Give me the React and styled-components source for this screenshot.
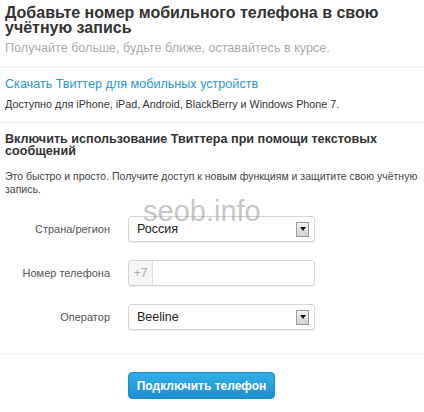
import React from 'react';
import styled, { createGlobalStyle } from 'styled-components';

const GlobalStyle = createGlobalStyle`
  html, body {
    margin: 0;
    padding: 0;
    background: #fff;
  }
  body {
    font-family: "Liberation Sans", Arial, sans-serif;
    color: #333;
  }
`;

function SelectBox({ value }) {
  return (
    <Select>
      <SelectValue>{value}</SelectValue>
      <ArrowButton>
        <Triangle />
      </ArrowButton>
    </Select>
  );
}

export default function App() {
  return (
    <Page>
      <GlobalStyle />
      <Section $pt={5} $pb={12}>
        <Title>Добавьте номер мобильного телефона в свою учётную запись</Title>
        <Subtitle>Получайте больше, будьте ближе, оставайтесь в курсе.</Subtitle>
      </Section>

      <Section $pt={9} $pb={11}>
        <DownloadLink href="#">Скачать Твиттер для мобильных устройств</DownloadLink>
        <Note>Доступно для iPhone, iPad, Android, BlackBerry и Windows Phone 7.</Note>
      </Section>

      <Section $pt={10} $pb={23}>
        <Heading>Включить использование Твиттера при помощи текстовых сообщений</Heading>
        <Description>
          Это быстро и просто. Получите доступ к новым функциям и защитите свою учётную запись.
        </Description>

        <Form>
          <Watermark>seob.info</Watermark>
          <Label>Страна/регион</Label>
          <SelectBox value="Россия" />

          <Label>Номер телефона</Label>
          <PhoneField>
            <Prefix>+7</Prefix>
            <PhoneInput type="text" />
          </PhoneField>

          <Label>Оператор</Label>
          <SelectBox value="Beeline" />
        </Form>
      </Section>

      <Actions>
        <ConnectButton>Подключить телефон</ConnectButton>
      </Actions>
    </Page>
  );
}

const Page = styled.div`
  width: 424px;
  height: 412px;
  overflow: hidden;
  background: #fff;
`;

const Section = styled.div`
  padding: ${(p) => p.$pt}px 5px ${(p) => p.$pb}px;
  border-bottom: 1px solid #ececec;
`;

const Title = styled.h2`
  margin: 0;
  font-size: 16px;
  line-height: 15px;
  font-weight: bold;
  color: #333;
`;

const Subtitle = styled.p`
  margin: 6px 0 0;
  font-size: 12.6px;
  line-height: 14px;
  color: #aaa;
`;

const DownloadLink = styled.a`
  display: block;
  font-size: 12.6px;
  line-height: 15px;
  color: #2a98cf;
  text-decoration: none;
`;

const Note = styled.p`
  margin: 6px 0 0;
  font-size: 10.75px;
  line-height: 13px;
  color: #333;
`;

const Heading = styled.h3`
  margin: 0;
  font-size: 12.6px;
  line-height: 12px;
  font-weight: bold;
  color: #333;
`;

const Description = styled.p`
  margin: 13px 0 0;
  font-size: 10.5px;
  line-height: 13px;
  color: #444;
`;

const Form = styled.div`
  position: relative;
  display: grid;
  grid-template-columns: 105px 187px;
  column-gap: 18px;
  row-gap: 18px;
  align-items: center;
  margin-top: 20px;
`;

const Watermark = styled.div`
  position: absolute;
  left: 138px;
  top: -20px;
  font-size: 29px;
  line-height: 30px;
  color: rgba(150, 150, 150, 0.55);
  pointer-events: none;
  z-index: 2;
`;

const Label = styled.label`
  text-align: right;
  font-size: 11px;
  color: #555;
`;

const Select = styled.div`
  height: 26px;
  box-sizing: border-box;
  border: 1px solid #d4d4d4;
  border-radius: 3px;
  background: #fff;
  display: flex;
  align-items: center;
  justify-content: space-between;
  padding: 0 5px 0 8px;
  box-shadow: 0 1px 1px rgba(0, 0, 0, 0.06);
`;

const SelectValue = styled.span`
  font-size: 12.5px;
  color: #222;
`;

const ArrowButton = styled.span`
  width: 13px;
  height: 15px;
  box-sizing: border-box;
  border: 1px solid #9a9a9a;
  background: linear-gradient(#f2f2f2, #d2d2d2);
  display: flex;
  align-items: center;
  justify-content: center;
`;

const Triangle = styled.span`
  width: 0;
  height: 0;
  border-left: 3px solid transparent;
  border-right: 3px solid transparent;
  border-top: 4px solid #111;
`;

const PhoneField = styled.div`
  height: 26px;
  box-sizing: border-box;
  border: 1px solid #d4d4d4;
  border-radius: 3px;
  display: flex;
  overflow: hidden;
  box-shadow: 0 1px 1px rgba(0, 0, 0, 0.06);
`;

const Prefix = styled.span`
  width: 23px;
  background: #f5f5f5;
  border-right: 1px solid #e0e0e0;
  color: #aaa;
  font-size: 12px;
  display: flex;
  align-items: center;
  justify-content: center;
`;

const PhoneInput = styled.input`
  flex: 1;
  min-width: 0;
  border: none;
  outline: none;
  background: #fff;
`;

const Actions = styled.div`
  padding: 18px 0 0 128px;
`;

const ConnectButton = styled.button`
  width: 147px;
  height: 27px;
  border: 1px solid #1c8cc9;
  border-radius: 4px;
  background: linear-gradient(#33aee6, #1b8fd2);
  color: #fff;
  font-family: "Liberation Sans", Arial, sans-serif;
  font-weight: bold;
  font-size: 12px;
  padding: 0;
  cursor: pointer;
`;
